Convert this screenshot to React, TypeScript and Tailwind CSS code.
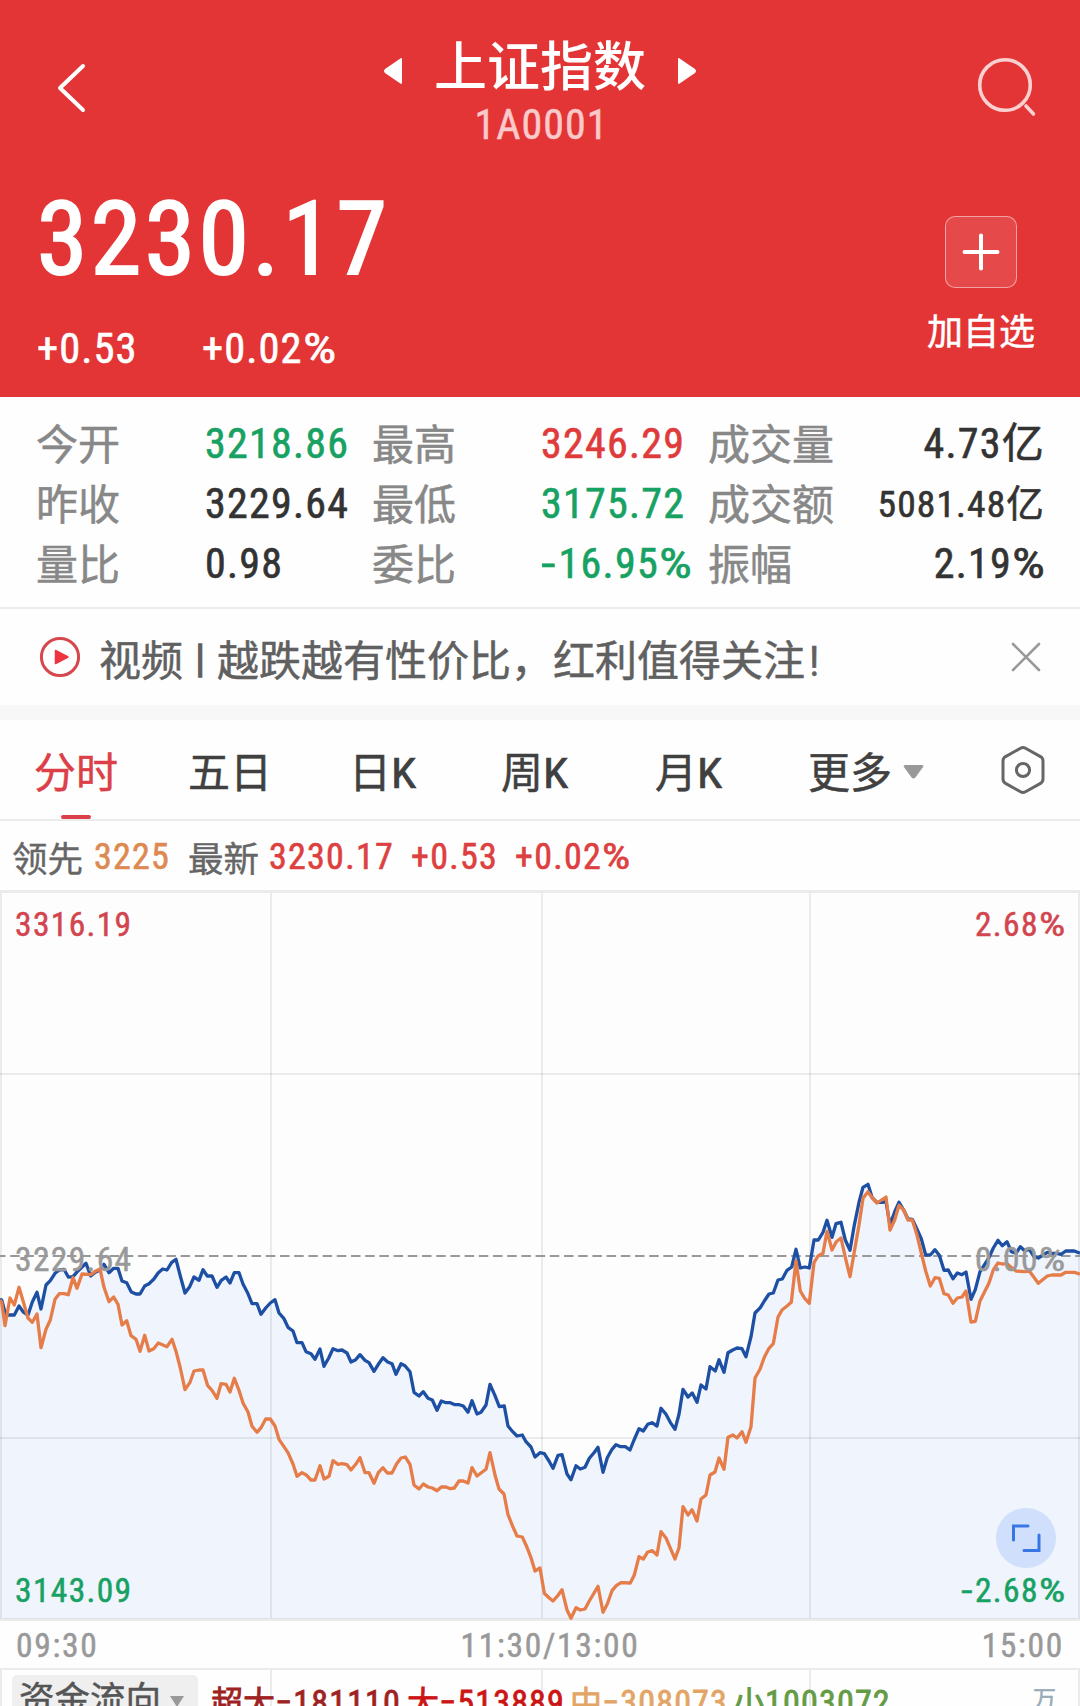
import type { ReactNode } from "react";

type Segment = { x: number; y: number; points: string };

const CHART_TOP = 890;

// Price series, stored as segments at three units per pixel relative to each segment's origin.
const indexSeries: Segment[] = [
  {
    x: 0,
    y: 1220,
    points:
      "0,238 5,240 17,285 43,285 57,258 70,276 84,285 97,246 111,217 123,267 138,195 151,182 165,160 178,150 192,148 205,171 219,170 232,155 246,141 258,130 272,168 286,157 300,150 312,133 327,158 341,145 354,145 366,183 380,188 394,216 408,222 420,222 434,198 447,191 461,178 475,158 488,147 501,150 515,127 528,118 541,168 555,219 569,200 582,171 597,181 609,149 622,168 636,168 651,202 664,181 678,171 690,189 703,158 717,158 729,192 743,219 756,251 771,251 783,283 797,264 811,249",
  },
  {
    x: 270,
    y: 1260,
    points:
      "15,119 27,159 42,176 54,202 69,213 81,248 96,248 108,275 123,281 135,298 150,267 162,319 176,294 189,266 204,272 216,270 231,279 243,306 257,299 270,284 285,301 297,308 312,334 325,313 339,293 353,306 366,311 378,343 393,311 405,317 420,335 432,397 447,408 460,395 474,415 487,420 501,451 514,423 528,428 541,428 555,434 568,434 580,438 594,457 606,422 621,462 633,457 648,435 660,373 675,407 688,440 703,438 714,498 728,515 741,528 757,525 768,545 783,561 795,591",
  },
  {
    x: 530,
    y: 1300,
    points:
      "30,458 43,461 57,483 69,505 84,466 96,464 111,522 123,539 138,497 151,507 165,502 178,475 192,458 204,442 219,517 232,473 246,448 258,434 272,440 286,440 300,450 312,420 327,386 340,393 353,373 366,368 381,378 393,325 408,343 421,367 435,388 447,343 459,268 474,291 487,279 501,307 513,255 528,267 540,200 556,213 567,179 582,217 594,158 608,150 621,144 636,146 648,170 663,110",
  },
  {
    x: 740,
    y: 1160,
    points:
      "45,459 61,443 73,423 87,402 100,399 114,360 127,357 141,331 155,321 168,268 181,324 195,321 208,324 222,240 235,240 249,217 261,181 276,232 288,191 303,187 316,240 330,271 342,200 357,127 369,82 384,73 396,112 411,127 426,127 438,125 450,195 464,155 477,127 491,150 504,177 517,178 531,208 544,236 557,285 571,285 585,269 598,286 612,331 625,330 639,356 652,339 666,344 678,336 693,418 706,389 720,335 734,313 747,293 760,264 774,241 787,257 801,245 814,275 828,280 841,260 854,272 868,268 882,290 895,294 909,285 922,277 936,280 950,280 963,283 977,273 1003,273 1020,280",
  },
];

const leadSeries: Segment[] = [
  {
    x: 0,
    y: 1220,
    points:
      "0,240 5,248 15,317 30,234 43,255 57,202 70,245 84,294 97,307 111,282 123,383 138,328 151,300 165,238 178,221 192,221 205,224 219,173 231,205 246,162 272,164 286,154 300,147 312,202 327,245 341,231 354,253 366,315 380,302 393,347 408,358 420,394 434,346 447,393 461,386 475,369 501,380 516,358 529,397 541,444 555,509 570,487 582,453 597,450 609,450 623,497 636,511 651,535 663,491 678,493 690,516 703,475 717,511 729,549 744,576 756,619 771,637 784,622 797,597 811,597",
  },
  {
    x: 270,
    y: 1260,
    points:
      "15,498 27,538 54,578 69,612 81,649 96,638 109,645 123,660 135,660 150,617 162,657 177,649 189,602 204,613 216,611 231,614 243,630 257,613 270,593 285,638 297,638 312,670 325,638 339,623 352,639 366,639 380,611 393,594 406,591 420,613 432,675 447,687 460,672 474,681 487,684 501,692 514,681 528,681 541,686 553,684 567,663 580,663 594,669 606,623 621,648 648,628 660,578 675,645 687,687 702,702 714,764 728,799 741,828 757,831 769,857 783,893 795,933 810,924",
  },
  {
    x: 530,
    y: 1300,
    points:
      "43,880 57,893 69,903 84,886 96,869 111,930 123,955 138,923 151,930 165,927 178,903 204,859 219,937 232,912 246,872 259,857 273,848 301,849 313,825 327,770 340,777 353,756 367,752 381,765 393,695 408,714 420,742 435,777 447,743 459,620 474,645 486,629 501,663 513,597 528,585 540,525 555,516 567,474 582,508 594,412 609,405 621,414 636,395 648,427 663,380",
  },
  {
    x: 740,
    y: 1160,
    points:
      "45,654 60,628 73,592 87,565 100,551 114,471 127,449 141,438 154,427 168,303 181,393 194,415 208,430 222,308 234,288 249,280 261,214 276,270 289,245 303,234 316,292 330,350 343,275 357,195 369,115 384,95 397,114 411,129 438,111 450,210 464,180 477,136 491,150 504,180 517,180 531,225 544,279 557,333 571,378 585,353 598,355 612,401 625,405 639,430 652,414 666,411 678,393 693,486 706,484 720,423 747,369 760,330 774,309 787,312 801,311 814,322 828,333 854,335 868,333 895,370 922,348 936,345 963,345 977,337 1003,337 1020,343",
  },
];

function toPoints(series: Segment[]) {
  return series
    .flatMap((s) =>
      s.points.split(" ").map((p) => {
        const [x, y] = p.split(",").map(Number);
        return `${(s.x + x / 3).toFixed(1)},${(s.y + y / 3 - CHART_TOP).toFixed(1)}`;
      }),
    )
    .join(" ");
}

const indexPoints = toPoints(indexSeries);
const leadPoints = toPoints(leadSeries);

function Figure({ text }: { text: string }) {
  const minus = text.startsWith("-");
  const percent = text.endsWith("%");
  return (
    <>
      {minus && <span className="mr-[0.14em] inline-block origin-left scale-x-[1.4]">-</span>}
      {text.replace(/^-|%$/g, "")}
      {percent && <span className="mr-[0.15em] inline-block origin-left scale-x-[1.24] tracking-normal">%</span>}
    </>
  );
}

function Header() {
  return (
    <header className="flex h-[397px] flex-col bg-[#e33536] text-white">
      <div className="flex h-[150px] justify-between pr-[43px] pl-[56px]">
        <svg className="mt-[62px] h-[52px] w-[49px]" viewBox="0 0 49 52" fill="none" stroke="#fff" strokeWidth="4" strokeLinecap="round" strokeLinejoin="round">
          <path d="M27 4 L4 26 L27 48" />
        </svg>
        <div className="flex flex-col items-center pt-[37px]">
          <div className="flex h-[62px] items-center gap-[32px]">
            <svg className="mt-[6px] h-[28px] w-[19px]" viewBox="0 0 19 28" fill="#fff">
              <path d="M19 2.5 V25.5 Q19 28 17 26.3 L2 16 Q0 14 2 12 L17 1.7 Q19 0 19 2.5Z" />
            </svg>
            <h1 className="text-[53px] leading-[62px] font-medium [-webkit-text-stroke:0px]">上证指数</h1>
            <svg className="mt-[6px] h-[28px] w-[19px]" viewBox="0 0 19 28" fill="#fff">
              <path d="M0 2.5 V25.5 Q0 28 2 26.3 L17 16 Q19 14 17 12 L2 1.7 Q0 0 0 2.5Z" />
            </svg>
          </div>
          <div className="mt-[4px] pl-[3px] text-[42px] leading-[44px] tracking-[0.025em] text-[#fbc9c9]">1A0001</div>
        </div>
        <svg className="mt-[56px] h-[64px] w-[62px]" viewBox="0 0 62 64" fill="none" stroke="#fbd0d0" strokeWidth="3.6" strokeLinecap="round">
          <circle cx="30" cy="29" r="25.3" />
          <path d="M51 50 L58.5 58" />
        </svg>
      </div>
      <div className="flex flex-1 justify-between pr-[45px] pl-[37px]">
        <div className="flex flex-col">
          <div className="mt-[36px] text-[102px] leading-[106px] tracking-[0.034em] [-webkit-text-stroke:2.2px]">3230.17</div>
          <div className="mt-[33px] flex text-[42.5px] leading-[48px] tracking-[0.025em] [-webkit-text-stroke:0.6px]">
            <span className="w-[165px]">+0.53</span>
            <span><Figure text="+0.02%" /></span>
          </div>
        </div>
        <div className="flex flex-col items-center pt-[66px]">
          <div className="flex size-[72px] items-center justify-center rounded-[10px] border-[1.5px] border-white/50 bg-white/10">
            <svg className="size-[38px]" viewBox="0 0 38 38" stroke="#fff" strokeWidth="4" strokeLinecap="round">
              <path d="M19 2.5 V35.5 M2.5 19 H35.5" />
            </svg>
          </div>
          <div className="mt-[25px] text-[36px] leading-[40px]">加自选</div>
        </div>
      </div>
    </header>
  );
}

const GREEN = "text-[#17a162]";
const RED = "text-[#e03b3b]";
const DARK = "text-[#333333]";

const stats = [
  [
    { label: "今开", value: "3218.86", tone: GREEN },
    { label: "最高", value: "3246.29", tone: RED },
    { label: "成交量", value: "4.73亿", tone: DARK },
  ],
  [
    { label: "昨收", value: "3229.64", tone: DARK },
    { label: "最低", value: "3175.72", tone: GREEN },
    { label: "成交额", value: "5081.48亿", tone: DARK, compact: true },
  ],
  [
    { label: "量比", value: "0.98", tone: DARK },
    { label: "委比", value: "-16.95%", tone: GREEN },
    { label: "振幅", value: "2.19%", tone: DARK },
  ],
];

function Stats() {
  return (
    <section className="flex h-[212px] flex-col border-b-2 border-[#ebebeb] pt-[17px] pr-[36px] pl-[36px]">
      {stats.map((row) => (
        <div key={row[0].label} className="grid h-[60px] grid-cols-[336px_336px_337px] items-center text-[42px] leading-[60px]">
          {row.map((cell, i) => (
            <div key={cell.label} className={i === 2 ? "flex justify-between" : "flex"}>
              <span className={i === 2 ? "pt-px leading-[62px] text-[#888888]" : "w-[169px] shrink-0 pt-px leading-[62px] text-[#888888]"}>{cell.label}</span>
              <span className={`${cell.tone} whitespace-nowrap tracking-[0.03em] [-webkit-text-stroke:0.6px] ${"compact" in cell ? "text-[37.5px]" : ""}`}>
                <Figure text={cell.value} />
              </span>
            </div>
          ))}
        </div>
      ))}
    </section>
  );
}

function NewsBar() {
  return (
    <section className="flex h-[111px] items-center border-b-[15px] border-[#f7f7f7] pr-[39px] pl-[39px]">
      <svg className="size-[42px]" viewBox="0 0 42 42">
        <circle cx="21" cy="21" r="18.6" fill="none" stroke="#d6474d" strokeWidth="3" />
        <path d="M16.5 14.5 V27.5 L29 21Z" fill="#ef3340" stroke="#ef3340" strokeWidth="1.5" strokeLinejoin="round" />
      </svg>
      <div className="ml-[18px] flex flex-1 items-center pt-[10px] text-[42px] leading-[60px] text-[#606060]">
        <span>视频</span>
        <span className="flex w-[34px] justify-center pb-[7px] text-[38px] [-webkit-text-stroke:1.4px]">|</span>
        <span>越跌越有性价比，红利值得关注<span className="ml-[4px]">!</span></span>
      </div>
      <svg className="size-[30px]" viewBox="0 0 30 30" stroke="#999" strokeWidth="2.6" strokeLinecap="round">
        <path d="M2 2 L28 28 M28 2 L2 28" />
      </svg>
    </section>
  );
}

function Tabs() {
  return (
    <nav className="flex h-[101px] items-center border-b-2 border-[#ebebeb] pr-[34px] pl-[35px] text-[42px] leading-[60px] text-[#404040]">
      <div className="relative w-[153px] pt-[9px] text-[#dc3f47]">
        <span className="-ml-px">分时</span>
        <span className="absolute top-[80px] left-[26px] h-[4px] w-[30px] rounded-[2px] bg-[#dc3f47]" />
      </div>
      <div className="w-[161px] pt-[9px]">五日</div>
      <div className="w-[152px] pt-[9px]">日<Key /></div>
      <div className="w-[154px] pt-[9px]">周<Key /></div>
      <div className="w-[153px] pt-[9px]">月<Key /></div>
      <div className="pt-[9px]">更多</div>
      <svg className="mt-[4px] ml-[11px] h-[14px] w-[21px]" viewBox="0 0 22 14" fill="#999" preserveAspectRatio="none">
        <path d="M2 0 H20 Q22 .5 21 2 L13 12.5 Q11 14.5 9 12.5 L1 2 Q0 .5 2 0Z" />
      </svg>
      <svg className="ml-auto h-[50px] w-[46px]" viewBox="0 0 46 50" fill="none" stroke="#666" strokeWidth="3" strokeLinejoin="round">
        <path d="M20.5 3.2 Q23 1.8 25.5 3.2 L40.5 11.6 Q43 13.2 43 16 V34 Q43 36.8 40.5 38.4 L25.5 46.8 Q23 48.2 20.5 46.8 L5.5 38.4 Q3 36.8 3 34 V16 Q3 13.2 5.5 11.6Z" />
        <circle cx="23" cy="25" r="6.6" />
      </svg>
    </nav>
  );
}

function Key() {
  return <span className="inline-block origin-left scale-x-110 [-webkit-text-stroke:0.6px]">K</span>;
}

function LegendRow() {
  return (
    <div className="flex h-[69px] items-center pt-[2px] pl-[12px] text-[36px] leading-[40px] tracking-[0.035em] text-[#dd4040] [-webkit-text-stroke:0.6px]">
      <span className="w-[82px] pt-[6px] text-[35.5px] tracking-normal text-[#666666] [-webkit-text-stroke:0.4px]">领先</span>
      <span className="w-[94px] text-[#dc8a52]">3225</span>
      <span className="w-[81px] pt-[6px] text-[35.5px] tracking-normal text-[#666666] [-webkit-text-stroke:0.4px]">最新</span>
      <span className="w-[142px]">3230.17</span>
      <span className="w-[104px]">+0.53</span>
      <span><Figure text="+0.02%" /></span>
    </div>
  );
}

function ChartLabel({ className, children }: { className: string; children: ReactNode }) {
  return <span className={`absolute text-[33.5px] leading-[36px] tracking-[0.04em] whitespace-nowrap [-webkit-text-stroke:0.5px] ${className}`}>{children}</span>;
}

function Chart() {
  return (
    <section className="relative h-[731px]">
      <svg className="block h-[731px] w-[1080px]" viewBox="0 0 1080 731" fill="none">
        <rect width="1080" height="731" fill="#fdfdfd" />
        <polygon points={`0,729 ${indexPoints} 1080,729`} fill="#eff4fd" />
        <g stroke="#000" strokeOpacity="0.07" strokeWidth="2">
          <path d="M0 1.5 H1080" strokeWidth="3" />
          <path d="M0 184 H1080 M0 548 H1080" />
          <path d="M0 729.5 H1080" strokeWidth="3" />
          <path d="M1 3 V728 M271 3 V728 M542 3 V728 M810 3 V728 M1079 3 V728" />
        </g>
        <path d="M0 366 H1080" stroke="#999" strokeWidth="2" strokeDasharray="9.5 4.7" strokeDashoffset="4" />
        <polyline points={indexPoints} stroke="#1d4fa3" strokeWidth="3.3" strokeLinejoin="round" />
        <polyline points={leadPoints} stroke="#e67c48" strokeWidth="3.3" strokeLinejoin="round" />
      </svg>
      <ChartLabel className="top-[17px] left-[15px] text-[#d2454e]">3316.19</ChartLabel>
      <ChartLabel className="top-[17px] right-[15px] text-[#d2454e]"><Figure text="2.68%" /></ChartLabel>
      <ChartLabel className="top-[352px] left-[15px] text-[#999999]">3229.64</ChartLabel>
      <ChartLabel className="top-[352px] right-[15px] text-[#999999]"><Figure text="0.00%" /></ChartLabel>
      <ChartLabel className="top-[683px] left-[15px] text-[#17a162]">3143.09</ChartLabel>
      <ChartLabel className="top-[683px] right-[15px] text-[#17a162]"><Figure text="-2.68%" /></ChartLabel>
      <button className="absolute top-[618px] left-[996px] flex size-[60px] items-center justify-center rounded-full bg-[#d0dffb]">
        <svg className="size-[30px]" viewBox="0 0 30 30" fill="none" stroke="#3876e6" strokeWidth="3" strokeLinecap="round">
          <path d="M2.5 17 V3 H17 M28 12 V27.5 H13" />
        </svg>
      </button>
    </section>
  );
}

function TimeAxis() {
  return (
    <div className="flex h-[49px] items-center justify-between border-b-2 border-[#ebebeb] pt-[2px] pr-[16px] pl-[16px] text-[33.5px] leading-[40px] tracking-[0.05em] text-[#999999] [-webkit-text-stroke:0.5px]">
      <span>09:30</span>
      <span className="pl-[20px]">11:30/13:00</span>
      <span>15:00</span>
    </div>
  );
}

function FlowItem({ name, amount, className }: { name: string; amount: string; className: string }) {
  return (
    <span className={className}>
      {name}
      <span className="text-[34px] tracking-[0.035em]">{amount}</span>
    </span>
  );
}

function FundFlow() {
  return (
    <section className="relative h-[36px] overflow-hidden">
      <svg className="absolute inset-0 h-[36px] w-[1080px]" viewBox="0 0 1080 36" stroke="#ebebeb" strokeWidth="2">
        <path d="M1 0 V36 M271 0 V36 M542 0 V36 M810 0 V36 M1079 0 V36" />
      </svg>
      <div className="relative flex pl-[12px]">
        <div className="mt-[5px] flex h-[46px] w-[186px] items-center rounded-[5px] bg-[#efefef] pt-[3px] pl-[7px] text-[35.5px] leading-[46px] text-[#555555]">
          资金流向
          <svg className="mt-[3px] ml-[8px] h-[11px] w-[16px]" viewBox="0 0 16 11" fill="#999">
            <path d="M1 0 H15 L8 11Z" />
          </svg>
        </div>
        <div className="mt-[9px] ml-[13px] flex flex-1 text-[32px] leading-[46px] whitespace-nowrap [-webkit-text-stroke:0.8px]">
          <FlowItem name="超大" amount="−181110" className="w-[196px] text-[#9e2222]" />
          <FlowItem name="大" amount="−513889" className="w-[163px] text-[#cc1515]" />
          <FlowItem name="中" amount="−308073" className="w-[163px] text-[#e3a566]" />
          <FlowItem name="小" amount="1003072" className="text-[#649b45]" />
        </div>
        <span className="mt-[9px] mr-[24px] text-[23px] leading-[42px] text-[#9aabb8]">万</span>
      </div>
    </section>
  );
}

export default function App() {
  return (
    <main className="h-[1706px] w-[1080px] overflow-hidden bg-[#fefefe] font-['Roboto_Condensed','Noto_Sans_CJK_SC',sans-serif] [-webkit-text-stroke:0.5px]">
      <Header />
      <Stats />
      <NewsBar />
      <Tabs />
      <LegendRow />
      <Chart />
      <TimeAxis />
      <FundFlow />
    </main>
  );
}
